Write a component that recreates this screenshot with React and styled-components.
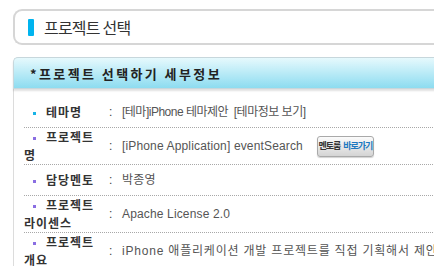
import { createGlobalStyle, styled } from 'styled-components';

const GlobalStyle = createGlobalStyle`
  body {
    margin: 0;
    background: #fff;
    font-family: "Liberation Sans", "Noto Sans CJK KR", sans-serif;
    overflow: hidden;
  }
`;

const rows = [
  { label: '테마명', value: '[테마]iPhone 테마제안\u00a0\u00a0[테마정보 보기]', bullet: '#17b3e6', spacing: '-0.5px' },
  { label: '프로젝트명', value: '[iPhone Application] eventSearch', bullet: '#8a6ee2', button: true },
  { label: '담당멘토', value: '박종영', bullet: '#8a6ee2' },
  { label: '프로젝트 라이센스', value: 'Apache License 2.0', bullet: '#8a6ee2' },
  { label: '프로젝트 개요', value: 'iPhone 애플리케이션 개발 프로젝트를 직접 기획해서 제안하는 프로젝트입니다.', bullet: '#8a6ee2', spacing: '0.8px' },
];

const App = () => {
  return (
    <>
      <GlobalStyle />
      <Page>
        <TitleBox>
          <TitleBar />
          <Title>프로젝트 선택</Title>
        </TitleBox>
        <Panel>
          <PanelHeader>*프로젝트 선택하기 세부정보</PanelHeader>
          <PanelBody>
            {rows.map((row) => (
              <Row key={row.label}>
                <Label>
                  <Bullet $color={row.bullet} />
                  {row.label}
                </Label>
                <Colon>:</Colon>
                <Value $spacing={row.spacing}>
                  {row.value}
                  {row.button && (
                    <MentorButton>
                      멘토룸<span>바로가기</span>
                    </MentorButton>
                  )}
                </Value>
              </Row>
            ))}
          </PanelBody>
        </Panel>
      </Page>
    </>
  );
};

export default App;

const Page = styled.div`
  width: 760px;
  padding: 9px 0 0 13px;
`;

const TitleBox = styled.div`
  display: flex;
  align-items: center;
  height: 32px;
  padding-left: 13px;
  border: 2px solid #d6d6d6;
  border-right: none;
  border-radius: 9px 0 0 9px;
`;

const TitleBar = styled.span`
  width: 6px;
  height: 17px;
  margin-right: 10px;
  background: #00b4ef;
  border-radius: 1px;
`;

const Title = styled.h1`
  margin: 0;
  font-family: "Noto Sans CJK KR", sans-serif;
  font-size: 16px;
  font-weight: 400;
  letter-spacing: -0.8px;
  color: #333;
  line-height: 20px;
`;

const Panel = styled.div`
  margin-top: 12px;
`;

const PanelHeader = styled.div`
  display: flex;
  align-items: center;
  height: 30px;
  padding-left: 16px;
  border: 1px solid #c7d7dc;
  border-right: none;
  border-radius: 5px 0 0 0;
  background: linear-gradient(#e6f9fd, #8ddcf0);
  box-shadow: 0 2px 2px rgba(0, 0, 0, 0.12);
  font-family: "Noto Sans CJK KR", sans-serif;
  font-size: 13px;
  font-weight: 700;
  letter-spacing: 2.4px;
  color: #222;
  position: relative;
`;

const PanelBody = styled.div`
  padding: 8px 0 0 10px;
  border-left: 1px solid #dcdcdc;
`;

const Row = styled.div`
  display: flex;
  align-items: center;
  min-height: 30px;
  border-bottom: 1px dotted #a8a8a8;
`;

const Label = styled.div`
  width: 76px;
  flex-shrink: 0;
  font-family: "Noto Sans CJK KR", sans-serif;
  font-size: 12px;
  font-weight: 700;
  letter-spacing: 1px;
  line-height: 18px;
  color: #333;
`;

const Bullet = styled.span`
  display: inline-block;
  width: 3px;
  height: 3px;
  margin: 0 10px 0 9px;
  vertical-align: middle;
  background: ${(p) => p.$color};
`;

const Colon = styled.div`
  width: 22px;
  flex-shrink: 0;
  padding-left: 9px;
  box-sizing: border-box;
  font-size: 12px;
  color: #444;
`;

const Value = styled.div`
  display: flex;
  align-items: center;
  white-space: nowrap;
  font-size: 12px;
  line-height: 18px;
  letter-spacing: ${(p) => p.$spacing || '0.15px'};
  color: #555;
`;

const MentorButton = styled.span`
  display: inline-flex;
  align-items: center;
  justify-content: center;
  width: 57px;
  height: 21px;
  margin-left: 14px;
  box-sizing: border-box;
  border: 1px solid #a9a9a9;
  border-radius: 3px;
  background: linear-gradient(#fbfbfb, #d4d4d4);
  box-shadow: 0 1px 1px rgba(0, 0, 0, 0.18);
  font-family: "Noto Sans CJK KR", sans-serif;
  font-size: 9px;
  font-weight: 700;
  letter-spacing: -1px;
  color: #333;

  span {
    margin-left: 3px;
    color: #1b78c0;
  }
`;
